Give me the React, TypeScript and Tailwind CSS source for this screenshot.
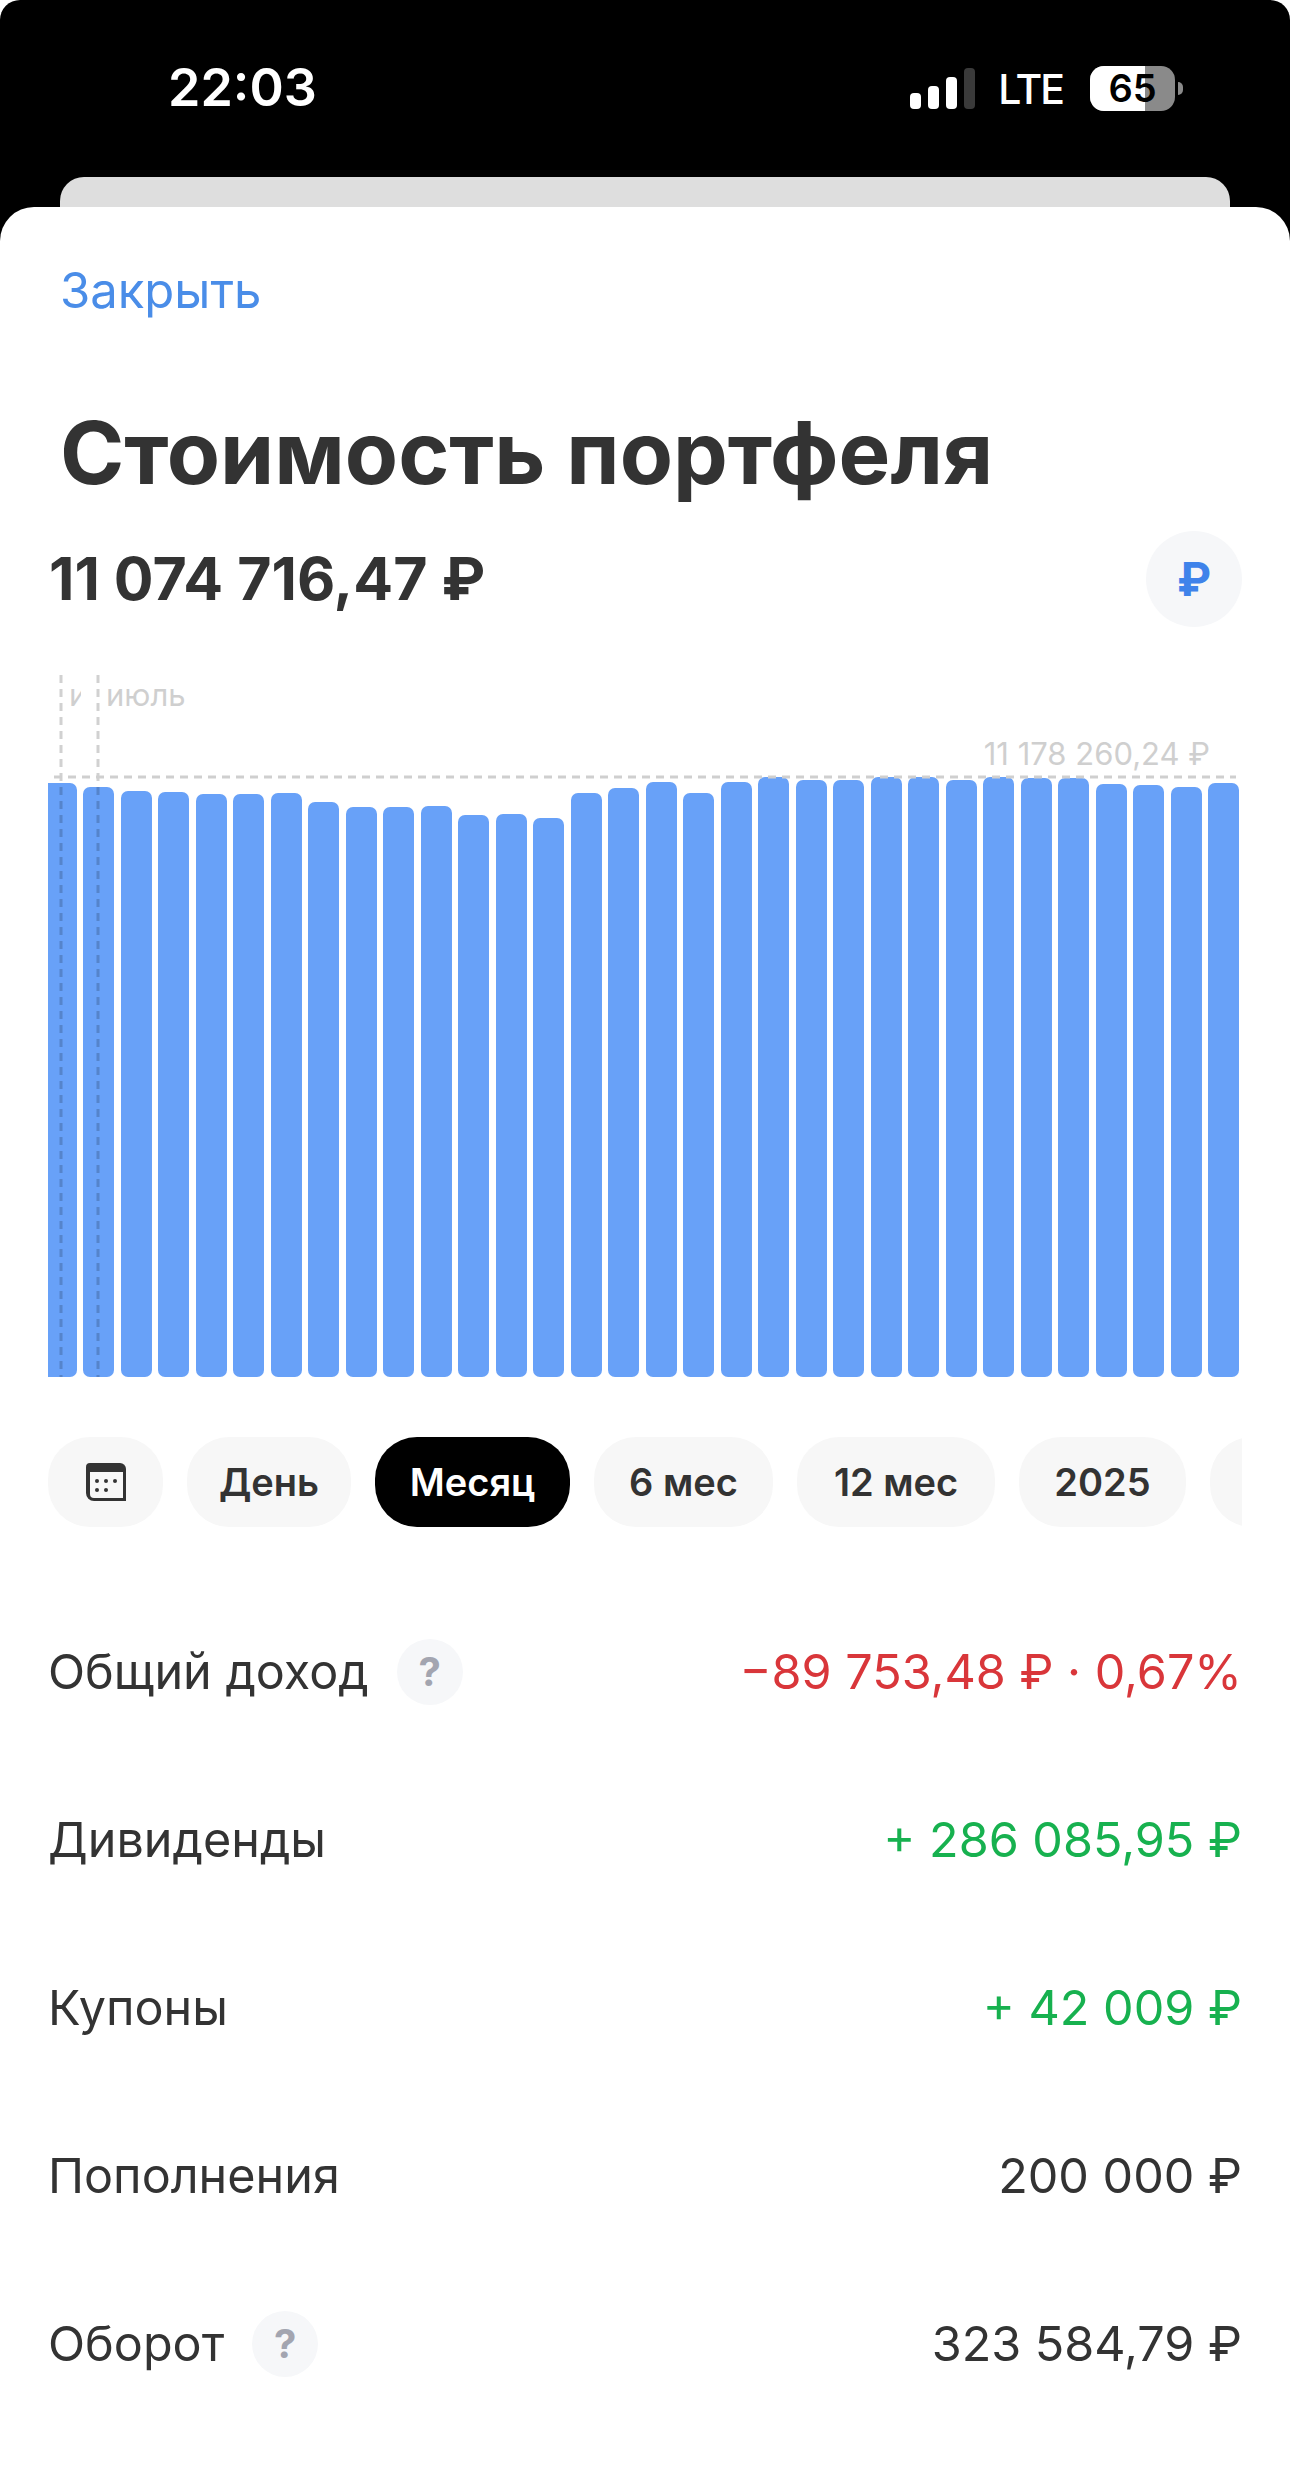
const barTops = [
  783, 787, 791, 792, 794, 794, 793, 802, 807, 807, 806, 815, 814, 818, 793, 788,
  782, 793, 782, 777, 780, 780, 777, 777, 780, 777, 778, 778, 784, 785, 787, 783,
];

const rows = [
  { label: "Общий доход", value: "−89 753,48 ₽ · 0,67%", color: "text-[#d9363a]", help: true },
  { label: "Дивиденды", value: "+ 286 085,95 ₽", color: "text-[#17b14f]" },
  { label: "Купоны", value: "+ 42 009 ₽", color: "text-[#17b14f]" },
  { label: "Пополнения", value: "200 000 ₽", color: "text-[#333333]" },
  { label: "Оборот", value: "323 584,79 ₽", color: "text-[#333333]", help: true },
];

const StatusBar = () => (
  <div className="flex h-[177px] items-start justify-between pl-[168px] pr-[107px] pt-[58px] text-white">
    <span className="text-[52px] font-semibold leading-[60px]">22:03</span>
    <div className="flex items-center pt-[6px]">
      <div className="flex items-end gap-[7px]">
        <span className="h-[16px] w-[11px] rounded-[4px] bg-white" />
        <span className="h-[23px] w-[11px] rounded-[4px] bg-white" />
        <span className="h-[32px] w-[11px] rounded-[4px] bg-white" />
        <span className="h-[41px] w-[11px] rounded-[4px] bg-[#3a3a3a]" />
      </div>
      <span className="ml-[23px] pt-[3px] text-[41px] font-medium leading-[45px] tracking-[-0.05em]">LTE</span>
      <div className="relative ml-[27px] h-[45px] w-[85px] overflow-hidden rounded-[14px] bg-[#8a8a8a]">
        <div className="h-full w-[55px] bg-white" />
        <span className="absolute inset-0 flex items-center justify-center text-[38px] font-semibold text-black">
          65
        </span>
      </div>
      <span className="ml-[3px] h-[13px] w-[5px] rounded-r-full bg-[#8a8a8a]" />
    </div>
  </div>
);

const Chart = () => (
  <div className="relative mt-[48px] h-[702px] w-[1194px]">
    <div className="flex h-full items-end gap-[6.5px]">
      {barTops.map((top, i) => (
        <div
          key={i}
          className={
            i === 0
              ? "w-[28.5px] shrink-0 rounded-r-[7px] bg-[#68a1f8]"
              : "w-[31px] shrink-0 rounded-[7px] bg-[#68a1f8]"
          }
          style={{ height: 1377 - top }}
        />
      ))}
    </div>
    <svg className="absolute inset-0" width="1194" height="702" fill="none">
      <path d="M13 0V702M50 0V702" stroke="#000000" strokeOpacity="0.18" strokeWidth="3" strokeDasharray="8 6" />
      <path d="M6 102H1188" stroke="#cfcfcf" strokeWidth="3" strokeDasharray="8 6" />
    </svg>
    <div className="absolute left-[21px] top-[2px] w-[12px] overflow-hidden text-[31px] leading-[36px] text-[#cfcfcf]">
      и
    </div>
    <div className="absolute left-[58px] top-[2px] text-[31px] leading-[36px] text-[#cfcfcf]">июль</div>
    <div className="absolute right-[32px] top-[61px] text-[31px] leading-[36px] text-[#cfcfcf]">
      11 178 260,24 ₽
    </div>
  </div>
);

const chipClass =
  "flex h-[90px] shrink-0 items-center justify-center rounded-[42px] text-[38px] font-semibold";

const chipIdle = `${chipClass} bg-[#f7f7f7] text-[#333333]`;

const Chips = () => (
  <div className="mt-[60px] flex w-[1194px] gap-[24px] overflow-hidden">
    <div className={`${chipIdle} w-[115px]`}>
      <svg width="40" height="38" viewBox="0 0 40 38">
        <path d="M4 0h30a6 6 0 0 1 6 6v32H8a8 8 0 0 1-8-8V4a4 4 0 0 1 4-4z" fill="#333333" />
        <path d="M4 9h33v26H8a4 4 0 0 1-4-4z" fill="#f7f7f7" />
        <circle cx="11" cy="18" r="2" fill="#333333" />
        <circle cx="20" cy="18" r="2" fill="#333333" />
        <circle cx="29" cy="18" r="2" fill="#333333" />
        <circle cx="11" cy="27" r="2" fill="#333333" />
        <circle cx="20" cy="27" r="2" fill="#333333" />
      </svg>
    </div>
    <div className={`${chipIdle} w-[164px]`}>День</div>
    <div className={`${chipClass} w-[195px] bg-black text-white`}>Месяц</div>
    <div className={`${chipIdle} w-[179px]`}>6 мес</div>
    <div className={`${chipIdle} w-[198px]`}>12 мес</div>
    <div className={`${chipIdle} w-[167px]`}>2025</div>
    <div className={`${chipIdle} w-[120px]`} />
  </div>
);

const HelpBadge = () => (
  <span className="ml-[28px] flex h-[66px] w-[66px] items-center justify-center rounded-full bg-[#f6f7f9] text-[40px] font-bold text-[#a3a5b0]">
    ?
  </span>
);

export default function App() {
  return (
    <div className="h-[2473px] w-[1290px] overflow-hidden bg-white font-['Inter',sans-serif]">
      <div className="h-full rounded-t-[20px] bg-black">
        <StatusBar />
        <div className="mx-[60px] h-[30px] rounded-t-[24px] bg-[#dedede]" />
        <div className="h-[2266px] rounded-t-[34px] bg-white pl-[48px]">
          <div className="pl-[12px] pt-[56px] text-[49px] leading-[56px] text-[#4a8de8]">Закрыть</div>
          <h1 className="mt-[82px] pl-[12px] text-[87px] font-bold leading-[104px] text-[#333333]">
            Стоимость портфеля
          </h1>
          <div className="mt-[26px] flex w-[1194px] items-center justify-between">
            <span className="pl-[1px] text-[59px] font-bold leading-[96px] text-[#333333]">11 074 716,47 ₽</span>
            <span className="flex h-[96px] w-[96px] items-center justify-center rounded-full bg-[#f6f7f9] text-[46px] font-bold text-[#3f83ea]">
              ₽
            </span>
          </div>
          <Chart />
          <Chips />
          <div className="mt-[61px] w-[1194px]">
            {rows.map((row) => (
              <div key={row.label} className="flex h-[168px] items-center justify-between text-[48.5px] text-[#333333]">
                <div className="flex items-center">
                  {row.label}
                  {row.help && <HelpBadge />}
                </div>
                <span className={row.color}>{row.value}</span>
              </div>
            ))}
          </div>
        </div>
      </div>
    </div>
  );
}
